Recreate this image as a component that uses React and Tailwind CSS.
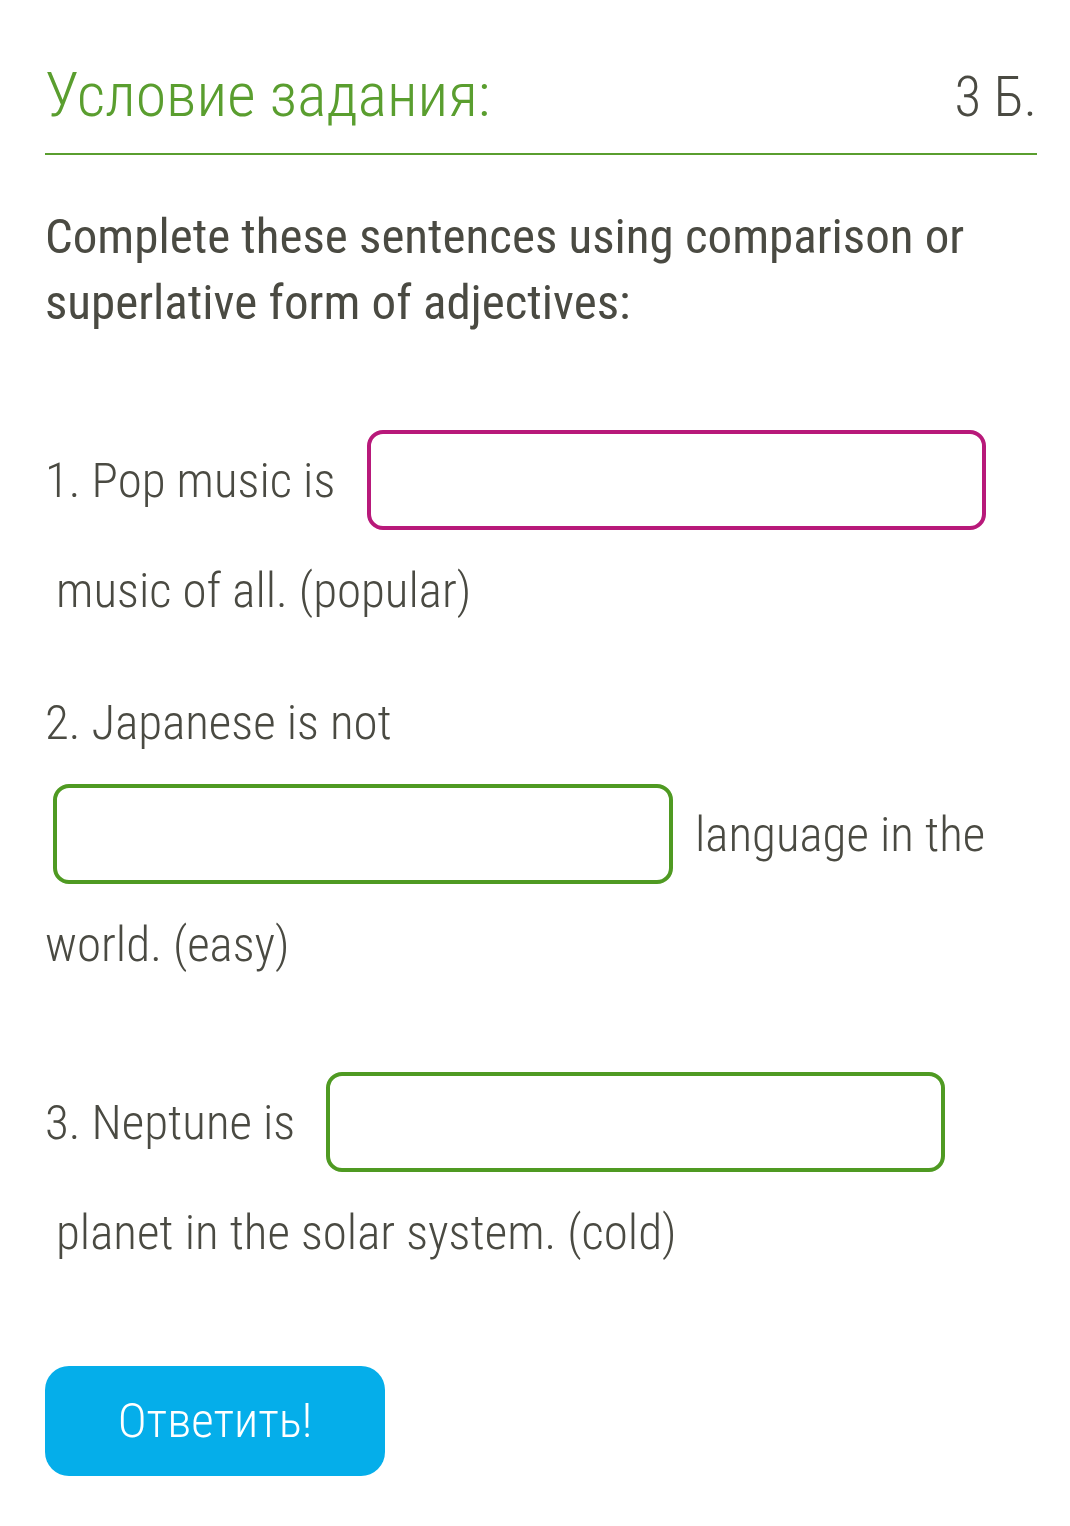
export default function App() {
    const cond = { fontFamily: '"Roboto Condensed", Roboto, sans-serif' };

    return (
        <div className="min-h-screen bg-white pl-[45px] pr-[33px] pt-[60px] pb-10 text-[#4a4a42]" style={cond}>
            {/* Header */}
            <div className="flex items-baseline justify-between border-b-2 border-[#5a9e2f] pb-[21px]">
                <h1 className="text-[62px] font-light leading-[70px] text-[#5a9e2f]">Условие задания:</h1>
                <span className="text-[55px] font-light leading-[70px] text-[#4a4a42]">3 Б.</span>
            </div>

            {/* Task text */}
            <div className="mt-[49px] pr-[30px] text-[49px] leading-[66px]">
                <p className="font-normal">Complete these sentences using comparison or superlative form of adjectives:</p>
                <br />
                <p className="font-light">
                    1. Pop music is
                    <span className="ml-[32px] my-[28px] inline-block h-[100px] w-[619px] rounded-[16px] border-4 border-[#b8197a] align-[-61px]"></span>
                    <br />
                    &nbsp;music of all. (popular)
                </p>
                <br />
                <p className="font-light">
                    2. Japanese is not
                    <br />
                    <span className="ml-[8px] my-[28px] inline-block h-[100px] w-[620px] rounded-[16px] border-4 border-[#4f9a22] align-[-61px]"></span>
                    <span className="ml-[22px]">language in the</span>
                    <br />
                    world. (easy)
                </p>
                <br />
                <p className="font-light">
                    3. Neptune is
                    <span className="ml-[31px] my-[28px] inline-block h-[100px] w-[619px] rounded-[16px] border-4 border-[#4f9a22] align-[-61px]"></span>
                    <br />
                    &nbsp;planet in the solar system. (cold)
                </p>
            </div>

            <button className="mt-[100px] flex h-[110px] w-[340px] items-center justify-center rounded-[24px] bg-[#05aeea] text-[49px] font-light text-white">
                Ответить!
            </button>
        </div>
    );
}
